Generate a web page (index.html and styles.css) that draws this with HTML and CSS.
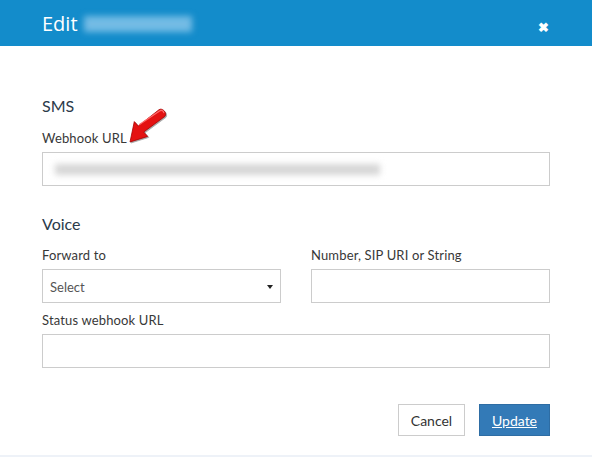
FILE: index.html
```html
<!DOCTYPE html>
<html>
<head>
<meta charset="utf-8">
<link rel="stylesheet" href="styles.css">
</head>
<body>
<div class="modal">
  <div class="modal-header">
    <span class="title">Edit</span>
    <span class="blurred-name"></span>
    <span class="close">&#10006;</span>
  </div>
  <div class="modal-body">
    <h3 class="section">SMS</h3>
    <div class="field">
      <label class="label label-first">Webhook URL
        <svg class="arrow" width="40" height="36" viewBox="0 0 40 36">
          <path d="M2 34 L6.3 13.6 L10.3 18 L31 1.7 C34 -0.5 39.5 4.5 37 8.3 L15.7 24 L19.7 28.4 Z" fill="#e41212" stroke="#a80000" stroke-width="0.8" stroke-linejoin="round"/>
          <path d="M11.5 16.5 L31.5 3 C33.5 1.8 35.5 2.5 35.8 4.5" fill="none" stroke="#ff6a6a" stroke-width="1.3" stroke-linecap="round"/>
        </svg>
      </label>
      <div class="input"><span class="blur-text"></span></div>
    </div>
    <h3 class="section voice">Voice</h3>
    <div class="grid">
      <div class="field">
        <label class="label">Forward to</label>
        <div class="input select">Select<span class="caret"></span></div>
      </div>
      <div class="field">
        <label class="label">Number, SIP URI or String</label>
        <div class="input"></div>
      </div>
    </div>
    <div class="field">
      <label class="label label-status">Status webhook URL</label>
      <div class="input"></div>
    </div>
    <div class="actions">
      <button class="btn btn-cancel">Cancel</button>
      <button class="btn btn-primary">Update</button>
    </div>
  </div>
</div>
</body>
</html>
```
FILE: styles.css
```css
html, body {
  margin: 0;
  padding: 0;
  background: #fff;
  font-family: Lato, "Noto Sans", sans-serif;
  color: #333;
}
.modal {
  width: 592px;
  height: 457px;
  box-sizing: border-box;
  border-bottom: 2px solid #eef2f8;
}
.modal-header {
  height: 46px;
  background: #138ccb;
  display: flex;
  align-items: center;
  padding: 0 42px;
}
.title {
  color: #fff;
  font-size: 20px;
  font-family: "Open Sans", sans-serif;
}
.blurred-name {
  display: inline-block;
  width: 108px;
  height: 16px;
  margin-left: 6px;
  margin-top: 2px;
  background: rgba(120, 190, 230, 0.95);
  filter: blur(3px);
}
.close {
  margin-left: auto;
  color: #fff;
  font-size: 13px;
  font-weight: bold;
  margin-right: 1px;
  margin-top: 8px;
}
.modal-body {
  padding: 50px 42px 0 42px;
}
.section {
  margin: 0;
  font-weight: normal;
  font-size: 16px;
  line-height: 20px;
  color: #2b3a4a;
}
.section.voice {
  margin-top: 28px;
}
.field {
  display: flex;
  flex-direction: column;
}
.label {
  font-size: 13px;
  line-height: 16px;
  margin: 13px 0 6px;
  color: #383838;
  letter-spacing: 0.15px;
  position: relative;
  display: block;
}
.label-first {
  margin-top: 14px;
}
.label-status {
  margin-top: 9px;
}
.arrow {
  position: absolute;
  left: 86px;
  top: -22px;
  filter: drop-shadow(1px 1px 0.6px rgba(0,0,0,0.35));
}
.input {
  height: 34px;
  box-sizing: border-box;
  border: 1px solid #ccc;
  display: flex;
  align-items: center;
  padding: 0 12px;
  font-size: 13px;
  color: #555;
}
.blur-text {
  display: block;
  width: 325px;
  height: 11px;
  background: #d6d6d6;
  filter: blur(3px);
}
.select {
  justify-content: space-between;
  padding: 2px 7px 0 7px;
}
.caret {
  width: 0;
  height: 0;
  border-left: 3.5px solid transparent;
  border-right: 3.5px solid transparent;
  border-top: 4px solid #222;
}
.grid {
  display: grid;
  grid-template-columns: 239px 239px;
  column-gap: 30px;
}
.actions {
  display: flex;
  justify-content: flex-end;
  gap: 14px;
  margin-top: 36px;
}
.btn {
  height: 32px;
  font-family: Lato, sans-serif;
  font-size: 14px;
  padding: 0 10px;
  border-radius: 0;
  cursor: pointer;
}
.btn-cancel {
  background: #fff;
  border: 1px solid #ccc;
  color: #333;
  width: 67px;
}
.btn-primary {
  background: #337ab7;
  border: 1px solid #2e6da4;
  color: #fff;
  text-decoration: underline;
  width: 71px;
}
```
